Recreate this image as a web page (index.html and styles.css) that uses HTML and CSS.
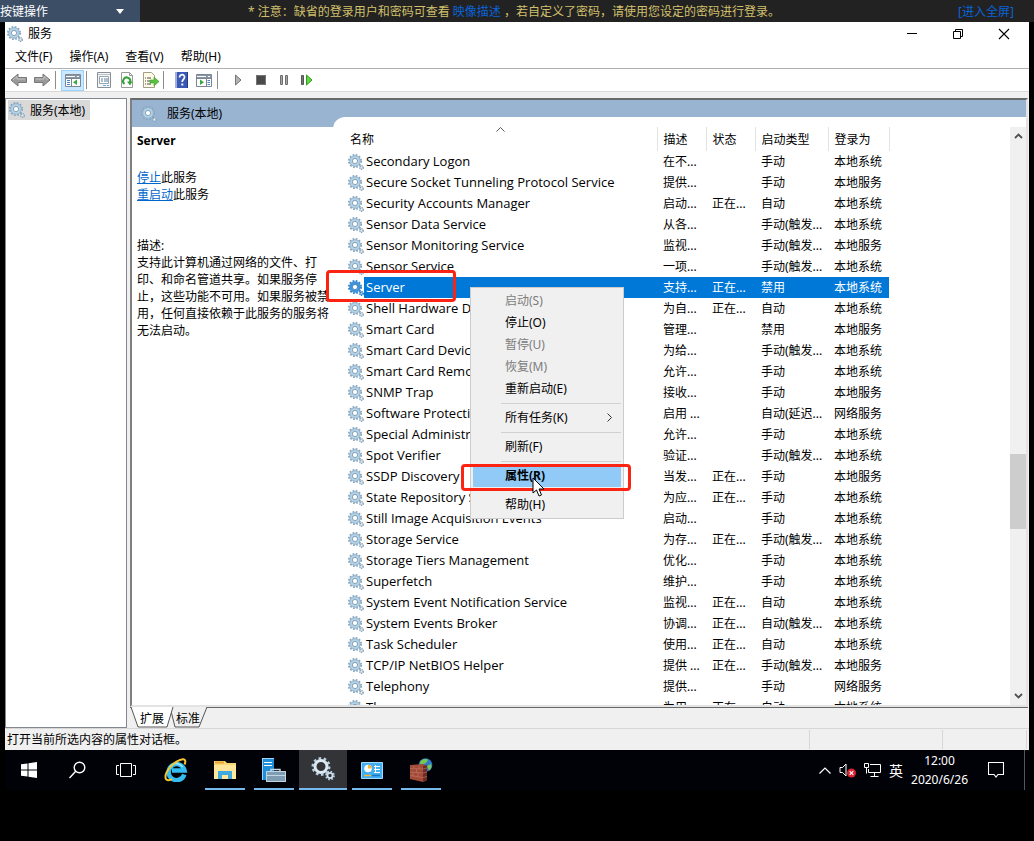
FILE: index.html
```html
<!DOCTYPE html>
<html lang="zh-CN">
<head>
<meta charset="utf-8">
<title>服务</title>
<link rel="stylesheet" href="styles.css">
</head>
<body>
<svg class="defs" aria-hidden="true">
  <symbol id="gear" viewBox="0 0 16 16">
    <circle cx="7" cy="7" r="6" fill="none" stroke="#86a3ba" stroke-width="2" stroke-dasharray="1.700 1.442"/>
    <circle cx="7" cy="7" r="4" fill="#fff" stroke="#b4d2e6" stroke-width="3"/>
    <circle cx="7" cy="7" r="5.300" fill="none" stroke="#8fafc8" stroke-width=".8"/>
    <circle cx="7" cy="7" r="2.600" fill="#fff" stroke="#6b8ba8" stroke-width=".8"/>
    <circle cx="13.500" cy="13.500" r="1.700" fill="#e8f2f8" stroke="#86a3ba" stroke-width="1.500" stroke-dasharray="1.200 .58"/>
  </symbol>
  <symbol id="gear-selected" viewBox="0 0 16 16">
    <circle cx="7" cy="7" r="6" fill="none" stroke="#2b7fc9" stroke-width="2" stroke-dasharray="1.700 1.442"/>
    <circle cx="7" cy="7" r="4.200" fill="#fff" stroke="#3f93d9" stroke-width="3.200"/>
    <circle cx="7" cy="7" r="2.600" fill="#fff" stroke="#2b70b0" stroke-width=".8"/>
    <circle cx="13.500" cy="13.500" r="1.700" fill="#9ccdf5" stroke="#1f78c6" stroke-width="1.500" stroke-dasharray="1.200 .58"/>
  </symbol>
</svg>

<header class="console-bar">
  <button class="key-menu" type="button"><span>按键操作</span><svg width="8" height="5" viewBox="0 0 8 5"><path d="M0 0h8L4 5z" fill="#fff"/></svg></button>
  <p class="console-note">* 注意：缺省的登录用户和密码可查看 <a href="#">映像描述</a> ，若自定义了密码，请使用您设定的密码进行登录。</p>
  <a class="fullscreen" href="#">[进入全屏]</a>
</header>

<main class="desktop">
  <section class="window">
    <div class="titlebar">
      <svg class="ico"><use href="#gear"/></svg>
      <h1>服务</h1>
      <div class="win-controls">
        <button type="button" aria-label="最小化"><svg width="12" height="12" viewBox="0 0 12 12"><path d="M1 5.500h10" stroke="#000"/></svg></button>
        <button type="button" aria-label="还原"><svg width="12" height="12" viewBox="0 0 12 12" fill="none" stroke="#000"><path d="M1.500 3.500h7v7h-7zM3.500 3.500v-2h7v7h-2"/></svg></button>
        <button type="button" aria-label="关闭"><svg width="12" height="12" viewBox="0 0 12 12"><path d="M1 1l10 10M11 1L1 11" stroke="#000" stroke-width="1.100"/></svg></button>
      </div>
    </div>
    <nav class="menubar">
      <button type="button">文件(F)</button><button type="button">操作(A)</button><button type="button">查看(V)</button><button type="button">帮助(H)</button>
    </nav>
    <div class="toolbar">
      <button type="button" aria-label="后退"><svg width="18" height="16" viewBox="0 0 18 16"><path d="M1 8l7-6v3.500h8.500v5H8V14z" fill="#9a9a9a" stroke="#777"/><path d="M3 8l4-3.500V7h8" fill="none" stroke="#c4c4c4"/></svg></button>
      <button type="button" aria-label="前进"><svg width="18" height="16" viewBox="0 0 18 16"><path d="M17 8l-7-6v3.500H1.500v5H10V14z" fill="#9a9a9a" stroke="#777"/><path d="M15 8l-4-3.500V7H3" fill="none" stroke="#c4c4c4"/></svg></button>
      <i class="sep"></i>
      <button class="on" type="button" aria-label="显示控制台树"><svg width="18" height="16" viewBox="0 0 18 16"><path d="M1.500 2.500h15v12h-15z" fill="#fff" stroke="#7b8794"/><path d="M2 3h14v3H2z" fill="#8995a3"/><path d="M2 4.500h9M13 4.500h2" stroke="#fff"/><path d="M7.500 6v8M2 6.500h14" stroke="#7b8794"/><path d="M3 8.500h3M3 10.500h3M3 12.500h3" stroke="#4d83c0"/><path d="M13 7.500v5.500L9 10.300z" fill="#3aa83a"/></svg></button>
      <i class="sep"></i>
      <button type="button" aria-label="属性"><svg width="18" height="16" viewBox="0 0 18 16"><path d="M2.500.5h13v15h-13z" fill="#f4f6f8" stroke="#8a8f96"/><path d="M3 2.500h12" stroke="#b9c2cb"/><path d="M4.500 4.500h9v7h-9z" fill="#fff" stroke="#9aa4ae"/><path d="M6 7h2M6 9h2M9 7h4M9 9h4" stroke="#5b7da3"/><path d="M8 13.500h3M12 13.500h2" stroke="#5bb1d8"/></svg></button>
      <button type="button" aria-label="刷新"><svg width="18" height="16" viewBox="0 0 18 16"><path d="M3.500.5h8l3 3v12h-11z" fill="#fff" stroke="#9a9a9a"/><path d="M11.500.5v3h3" fill="none" stroke="#9a9a9a"/><path d="M6.500 12A3.600 3.600 0 1 1 12 10.500" fill="none" stroke="#35a235" stroke-width="2"/><path d="M9 9.500h5.500L12 13.500z" fill="#35a235"/></svg></button>
      <button type="button" aria-label="导出列表"><svg width="18" height="16" viewBox="0 0 18 16"><path d="M2.500.5h8l3 3v12h-11z" fill="#fffbe6" stroke="#a39e8a"/><path d="M4 6h1M6 6h4M4 9h1M6 9h3M4 12h1M6 12h4" stroke="#4a4a4a"/><path d="M9 8h4V5l5 4.500-5 4.500v-3H9z" fill="#5cc043" stroke="#3c9b2b" stroke-width=".6"/></svg></button>
      <i class="sep"></i>
      <button type="button" aria-label="帮助"><svg width="18" height="16" viewBox="0 0 18 16"><path d="M3 0h13v16H3z" fill="#3a59b5"/><path d="M3 0h2v16H3z" fill="#9db0e0"/><path d="M15.500 0v16" stroke="#243b85"/><path d="M7.500 5.500c0-4 5.500-3.500 5 0-.2 1.800-2.300 2-2.300 4.500" fill="none" stroke="#fff" stroke-width="1.700"/><path d="M9.300 11.500h2v2h-2z" fill="#fff"/></svg></button>
      <button type="button" aria-label="显示操作窗格"><svg width="18" height="16" viewBox="0 0 18 16"><path d="M1.500 2.500h15v12h-15z" fill="#fff" stroke="#7b8794"/><path d="M2 3h14v3H2z" fill="#8995a3"/><path d="M2 4.500h9M13 4.500h2" stroke="#fff"/><path d="M11.500 6v8M2 6.500h14" stroke="#7b8794"/><path d="M12.500 8.500H15M12.500 10.500H15M12.500 12.500H15" stroke="#4d83c0"/><path d="M5 7.500v5.500l4-2.700z" fill="#3aa83a"/></svg></button>
      <i class="sep service-sep"></i>
      <button type="button" aria-label="启动服务"><svg width="14" height="14" viewBox="0 0 14 14"><path d="M4.500 2l5.500 5-5.500 5z" fill="#b4b4b4" stroke="#757575"/></svg></button>
      <button type="button" aria-label="停止服务"><svg width="14" height="14" viewBox="0 0 14 14"><path d="M2 2h10v10H2z" fill="#4a4a4a"/><path d="M2.500 2.500h9v9h-9z" fill="none" stroke="#777"/></svg></button>
      <button type="button" aria-label="暂停服务"><svg width="14" height="14" viewBox="0 0 14 14"><path d="M3.500 2.500h2v9h-2zM8.500 2.500h2v9h-2z" fill="#a5a5a5" stroke="#707070"/></svg></button>
      <button type="button" aria-label="重新启动服务"><svg width="14" height="14" viewBox="0 0 14 14"><path d="M1.500 2.500h2v9h-2z" fill="#777" stroke="#555"/><path d="M6.500 2l5.500 5-5.500 5z" fill="#67d34b" stroke="#2f9e1d"/></svg></button>
    </div>

    <div class="panes">
      <aside class="tree"><a href="#"><svg class="ico"><use href="#gear"/></svg><span>服务(本地)</span></a></aside>
      <div class="result">
        <div class="view">
          <h2><svg class="ico"><use href="#gear"/></svg>服务(本地)</h2>
          <div class="view-body">
            <section class="detail">
              <h3>Server</h3>
              <p class="actions"><a href="#">停止</a>此服务<br><a href="#">重启动</a>此服务</p>
              <p>描述:<br>支持此计算机通过网络的文件、打印、和命名管道共享。如果服务停止，这些功能不可用。如果服务被禁用，任何直接依赖于此服务的服务将无法启动。</p>
            </section>
            <div class="list">
              <table>
                <colgroup><col class="c-name"><col class="c-desc"><col class="c-state"><col class="c-type"><col class="c-user"></colgroup>
                <thead><tr><th>名称<svg class="sort" width="9" height="5" viewBox="0 0 9 5"><path d="M.5 4.500l4-4 4 4" fill="none" stroke="#555"/></svg></th><th>描述</th><th>状态</th><th>启动类型</th><th>登录为</th></tr></thead>
                <tbody>
                <tr><td><div class="svc"><svg class="ico"><use href="#gear"/></svg><span>Secondary Logon</span></div></td><td>在不...</td><td></td><td>手动</td><td>本地系统</td></tr>
                <tr><td><div class="svc"><svg class="ico"><use href="#gear"/></svg><span>Secure Socket Tunneling Protocol Service</span></div></td><td>提供...</td><td></td><td>手动</td><td>本地服务</td></tr>
                <tr><td><div class="svc"><svg class="ico"><use href="#gear"/></svg><span>Security Accounts Manager</span></div></td><td>启动...</td><td>正在...</td><td>自动</td><td>本地系统</td></tr>
                <tr><td><div class="svc"><svg class="ico"><use href="#gear"/></svg><span>Sensor Data Service</span></div></td><td>从各...</td><td></td><td>手动(触发...</td><td>本地系统</td></tr>
                <tr><td><div class="svc"><svg class="ico"><use href="#gear"/></svg><span>Sensor Monitoring Service</span></div></td><td>监视...</td><td></td><td>手动(触发...</td><td>本地服务</td></tr>
                <tr><td><div class="svc"><svg class="ico"><use href="#gear"/></svg><span>Sensor Service</span></div></td><td>一项...</td><td></td><td>手动(触发...</td><td>本地系统</td></tr>
                <tr class="selected"><td><div class="svc"><svg class="ico"><use href="#gear-selected"/></svg><span>Server</span></div></td><td>支持...</td><td>正在...</td><td>禁用</td><td>本地系统</td></tr>
                <tr><td><div class="svc"><svg class="ico"><use href="#gear"/></svg><span>Shell Hardware Detection</span></div></td><td>为自...</td><td>正在...</td><td>自动</td><td>本地系统</td></tr>
                <tr><td><div class="svc"><svg class="ico"><use href="#gear"/></svg><span>Smart Card</span></div></td><td>管理...</td><td></td><td>禁用</td><td>本地服务</td></tr>
                <tr><td><div class="svc"><svg class="ico"><use href="#gear"/></svg><span>Smart Card Device Enumeration Service</span></div></td><td>为给...</td><td></td><td>手动(触发...</td><td>本地系统</td></tr>
                <tr><td><div class="svc"><svg class="ico"><use href="#gear"/></svg><span>Smart Card Removal Policy</span></div></td><td>允许...</td><td></td><td>手动</td><td>本地系统</td></tr>
                <tr><td><div class="svc"><svg class="ico"><use href="#gear"/></svg><span>SNMP Trap</span></div></td><td>接收...</td><td></td><td>手动</td><td>本地服务</td></tr>
                <tr><td><div class="svc"><svg class="ico"><use href="#gear"/></svg><span>Software Protection</span></div></td><td>启用 ...</td><td></td><td>自动(延迟...</td><td>网络服务</td></tr>
                <tr><td><div class="svc"><svg class="ico"><use href="#gear"/></svg><span>Special Administration Console Helper</span></div></td><td>允许...</td><td></td><td>手动</td><td>本地系统</td></tr>
                <tr><td><div class="svc"><svg class="ico"><use href="#gear"/></svg><span>Spot Verifier</span></div></td><td>验证...</td><td></td><td>手动(触发...</td><td>本地系统</td></tr>
                <tr><td><div class="svc"><svg class="ico"><use href="#gear"/></svg><span>SSDP Discovery</span></div></td><td>当发...</td><td>正在...</td><td>手动</td><td>本地服务</td></tr>
                <tr><td><div class="svc"><svg class="ico"><use href="#gear"/></svg><span>State Repository Service</span></div></td><td>为应...</td><td>正在...</td><td>手动</td><td>本地系统</td></tr>
                <tr><td><div class="svc"><svg class="ico"><use href="#gear"/></svg><span>Still Image Acquisition Events</span></div></td><td>启动...</td><td></td><td>手动</td><td>本地系统</td></tr>
                <tr><td><div class="svc"><svg class="ico"><use href="#gear"/></svg><span>Storage Service</span></div></td><td>为存...</td><td>正在...</td><td>手动(触发...</td><td>本地系统</td></tr>
                <tr><td><div class="svc"><svg class="ico"><use href="#gear"/></svg><span>Storage Tiers Management</span></div></td><td>优化...</td><td></td><td>手动</td><td>本地系统</td></tr>
                <tr><td><div class="svc"><svg class="ico"><use href="#gear"/></svg><span>Superfetch</span></div></td><td>维护...</td><td></td><td>手动</td><td>本地系统</td></tr>
                <tr><td><div class="svc"><svg class="ico"><use href="#gear"/></svg><span>System Event Notification Service</span></div></td><td>监视...</td><td>正在...</td><td>自动</td><td>本地系统</td></tr>
                <tr><td><div class="svc"><svg class="ico"><use href="#gear"/></svg><span>System Events Broker</span></div></td><td>协调...</td><td>正在...</td><td>自动(触发...</td><td>本地系统</td></tr>
                <tr><td><div class="svc"><svg class="ico"><use href="#gear"/></svg><span>Task Scheduler</span></div></td><td>使用...</td><td>正在...</td><td>自动</td><td>本地系统</td></tr>
                <tr><td><div class="svc"><svg class="ico"><use href="#gear"/></svg><span>TCP/IP NetBIOS Helper</span></div></td><td>提供 ...</td><td>正在...</td><td>手动(触发...</td><td>本地服务</td></tr>
                <tr><td><div class="svc"><svg class="ico"><use href="#gear"/></svg><span>Telephony</span></div></td><td>提供...</td><td></td><td>手动</td><td>网络服务</td></tr>
                <tr><td><div class="svc"><svg class="ico"><use href="#gear"/></svg><span>Themes</span></div></td><td>为用...</td><td>正在...</td><td>自动</td><td>本地系统</td></tr>
                </tbody>
              </table>
              <div class="scrollbar">
                <svg width="9" height="6" viewBox="0 0 9 6"><path d="M1 5l3.500-3.500L8 5" fill="none" stroke="#505050" stroke-width="1.800"/></svg>
                <div class="track"><i class="before"></i><i class="thumb"></i><i class="after"></i></div>
                <svg width="9" height="6" viewBox="0 0 9 6"><path d="M1 1l3.500 3.500L8 1" fill="none" stroke="#505050" stroke-width="1.800"/></svg>
              </div>
            </div>
          </div>
        </div>
        <div class="tabs">
          <svg class="tab-shape" width="80" height="21" viewBox="0 0 80 21" fill="none"><path d="M40 0L45 20h24l8-20" fill="#f0f0f0" stroke="#555"/><path d="M1 0h42L37 20.500H8z" fill="#fff"/><path d="M1 0l7 20h29l6-20" stroke="#555"/></svg>
          <button type="button">扩展</button><button type="button">标准</button>
        </div>
      </div>
    </div>
    <footer class="status"><span class="message">打开当前所选内容的属性对话框。</span><span class="cell wide"></span><span class="cell"></span></footer>
  </section>

  <nav class="taskbar">
    <button type="button" aria-label="开始"><svg width="16" height="16" viewBox="0 0 16 16" fill="#fff"><path d="M0 2.300l6.500-.9v6.100H0zM7.500 1.200L16 0v7.500H7.500zM0 8.500h6.500v6.100L0 13.700zM7.500 8.500H16V16l-8.500-1.200z"/></svg></button>
    <button type="button" aria-label="搜索"><svg width="18" height="18" viewBox="0 0 18 18" fill="none" stroke="#fff" stroke-width="1.400"><circle cx="10.500" cy="6.500" r="5.300"/><path d="M6.700 10.300L.5 17"/></svg></button>
    <button type="button" aria-label="任务视图"><svg width="22" height="16" viewBox="0 0 22 16" fill="none" stroke="#fff"><path d="M4.500 1.500h11v13h-11zM3 3.500H.5v9H3M17 3.500h2.500v9H17"/></svg></button>
    <button type="button" aria-label="Internet Explorer"><svg width="24" height="24" viewBox="0 0 24 24" fill="none"><path d="M20.300 16.500A8 8 0 1 1 20.500 12.500H8" stroke="#35bdf3" stroke-width="4.500"/><path d="M18.500 9A7.500 7.500 0 0 0 6 9" stroke="#b3ebff" stroke-width="1.200"/><path d="M20.500 6.500C22.500 2.500 20.500 0 16.500 1.800 9 4.500 1 13.500 1.500 19.500c.3 3.800 4.500 3 6.500 1.500" stroke="#f6c631" stroke-width="2"/></svg></button>
    <button class="running" type="button" aria-label="文件资源管理器"><svg width="22" height="20" viewBox="0 0 22 20"><path d="M0 1h11l2 2h9v16H0z" fill="#f7d774"/><path d="M0 5h22v14H0z" fill="#ffe69b"/><path d="M1 1.500h9v2H1z" fill="#e8a33b"/><path d="M4 19v-8h14v8h-4v-4H8v4z" fill="#3fa9e0"/></svg></button>
    <button class="running" type="button" aria-label="服务器管理器"><svg width="24" height="24" viewBox="0 0 24 24"><path d="M0 0h12v22H0z" fill="#1d8fdb"/><path d="M0 .5h12M.5 0v22" stroke="#9fd4f7"/><path d="M2 4.500h8M2 7.500h8" stroke="#fff"/><path d="M9 11.500h9v3H9z" fill="none" stroke="#c9d6df" stroke-width="1.500"/><path d="M4 13h20v11H4z" fill="#7e9db3"/><path d="M4.500 13.500h19v10h-19zM4 17.500h20" fill="none" stroke="#c3d6e3"/></svg></button>
    <button class="active" type="button" aria-label="服务"><svg width="24" height="24" viewBox="0 0 24 24" fill="none"><circle cx="10" cy="9.500" r="8.300" stroke="#b7cde0" stroke-width="2.400" stroke-dasharray="2.600 2.600"/><circle cx="10" cy="9.500" r="6" stroke="#dbe8f2" stroke-width="3"/><circle cx="19" cy="18.500" r="4" stroke="#b7cde0" stroke-width="1.800" stroke-dasharray="1.600 1.540"/><circle cx="19" cy="18.500" r="2.600" stroke="#cfe0ed" stroke-width="1.800"/></svg></button>
    <button class="running" type="button" aria-label="控制面板"><svg width="22" height="17" viewBox="0 0 22 17"><path d="M.5.5h21v16H.5z" fill="#42aef0" stroke="#9fdcff"/><circle cx="7" cy="6.500" r="3.800" fill="#fff"/><path d="M7 6.500V2.700a3.800 3.800 0 0 1 3.800 3.800z" fill="#f6b73c"/><path d="M13 4.500h6M13 7.500h6M13 10.500h6M14.500 3v8" stroke="#fff"/><path d="M3 13.500h7" stroke="#f6b73c" stroke-width="1.500"/><path d="M11 13.500h8" stroke="#1976c0" stroke-width="1.500"/></svg></button>
    <button class="running" type="button" aria-label="防火墙"><svg width="24" height="24" viewBox="0 0 24 24" fill="none"><circle cx="16.500" cy="7" r="6.800" fill="#3079c9"/><path d="M11 4c2-3 6-4 8-2l-2 3-3 1-2 3zM18 8l4-2c1 3 0 5-2 6.500z" fill="#77c94e"/><path d="M1 7l13-1 4 2v14l-4 2-13-3z" fill="#a34a38"/><path d="M14 8l4-1v15l-4 2z" fill="#6e2b20"/><path d="M1 10.500l13 .5 4-1M1 14l13 1 4-1M1 17.500l13 2 4-1M5 7.500v3M10 7.500V11M7.500 11v3.500M4 14v4M9 15v4" stroke="#c07a66" stroke-width=".6"/></svg></button>
    <div class="tray">
      <svg width="12" height="7" viewBox="0 0 12 7"><path d="M.5 6.500L6 1l5.500 5.500" fill="none" stroke="#fff" stroke-width="1.200"/></svg>
      <svg width="17" height="16" viewBox="0 0 17 16" fill="none"><path d="M1 5.500h2.500L7 2v12l-3.500-3.500H1z" stroke="#fff"/><circle cx="12.500" cy="11" r="4.500" fill="#d9222f"/><path d="M10.700 9.200l3.600 3.600M14.300 9.200l-3.600 3.600" stroke="#fff" stroke-width="1.200"/></svg>
      <svg width="17" height="14" viewBox="0 0 17 14" fill="none" stroke="#fff"><path d="M6 1.500h10.500v8h-12V6M10.500 10v3M6.500 13.500h8M.5.500h4v4h-4zM2.500 4.500v6"/></svg>
      <span class="ime">英</span>
      <time datetime="2020-06-26T12:00">12:00<br>2020/6/26</time>
      <svg class="notify" width="16" height="16" viewBox="0 0 16 16" fill="none" stroke="#fff"><path d="M.5.5h15v12H10l-2 2.500-2-2.500H.5z" stroke-width="1.100"/></svg>
      <i class="peek"></i>
    </div>
  </nav>

  <menu class="context">
    <li><button type="button" disabled>启动(S)</button></li>
    <li><button type="button">停止(O)</button></li>
    <li><button type="button" disabled>暂停(U)</button></li>
    <li><button type="button" disabled>恢复(M)</button></li>
    <li><button type="button">重新启动(E)</button></li>
    <li class="rule"></li>
    <li><button type="button">所有任务(K)<svg width="5" height="9" viewBox="0 0 5 9"><path d="M.5.500l4 4-4 4" fill="none" stroke="#333"/></svg></button></li>
    <li class="rule"></li>
    <li><button type="button">刷新(F)</button></li>
    <li class="rule"></li>
    <li><button class="hover" type="button">属性(R)</button></li>
    <li class="rule"></li>
    <li><button type="button">帮助(H)</button></li>
  </menu>
  <div class="mark mark-service"></div>
  <div class="mark mark-menu"></div>
  <svg class="cursor" width="13" height="20" viewBox="0 0 13 20"><path d="M1 1v15l3.500-3 2.500 6 2.500-1-2.500-6H12z" fill="#fff" stroke="#000"/></svg>
</main>
</body>
</html>
```

FILE: styles.css
```css
* { box-sizing: border-box; }

body {
  margin: 0;
  height: 100vh;
  display: flex;
  flex-direction: column;
  overflow: hidden;
  background: #000;
  color: #000;
  font: 12px/17px "Noto Sans", "Noto Sans CJK SC", sans-serif;
}

h1, h2, h3, p, menu { margin: 0; padding: 0; font-size: 12px; font-weight: 400; }
button { font: inherit; color: inherit; border: 0; padding: 0; background: none; }
a { color: #0066cc; }
svg { flex: none; display: block; }
.defs { position: absolute; width: 0; height: 0; }
.ico { width: 16px; height: 16px; }

/* Remote console strip */
.console-bar {
  flex: none;
  height: 22px;
  display: grid;
  grid-template-columns: 140px 1fr 140px;
  align-items: center;
  background: #222;
}
.key-menu {
  height: 22px;
  display: flex;
  align-items: center;
  justify-content: space-between;
  padding-right: 16px;
  background: #3b4e66;
  color: #fff;
}
.console-note { padding-right: 6px; text-align: center; color: #d2c06c; white-space: nowrap; }
.console-note a, .fullscreen { color: #0a63d8; text-decoration: none; }
.fullscreen { padding-right: 20px; text-align: right; }

/* Desktop */
.desktop {
  flex: 1;
  min-height: 0;
  position: relative;
  display: flex;
  flex-direction: column;
  padding: 0 5px 51px;
}
.window {
  flex: 1;
  min-height: 0;
  display: flex;
  flex-direction: column;
  background: #f0f0f0;
}
.titlebar, .menubar, .toolbar { flex: none; display: flex; align-items: center; background: #fff; }
.titlebar { height: 23px; padding-left: 2px; gap: 5px; }
.win-controls { margin-left: auto; display: flex; padding-right: 2px; }
.win-controls button { width: 46px; height: 20px; display: grid; place-items: center; }
.menubar { height: 24px; padding-left: 10px; gap: 17px; border-bottom: 1px solid #b0b0b0; }
.toolbar { height: 23px; padding-left: 2px; border-bottom: 1px solid #d9d9d9; }
.toolbar button { width: 23px; height: 21px; display: grid; place-items: center; }
.toolbar .on { background: #cce8ff; border: 1px solid #99d1ff; }
.toolbar .sep { width: 1px; height: 18px; margin: 0 5px 0 2px; background: #8d8d8d; }
.toolbar .service-sep { margin-right: 8px; }

.panes { flex: 1; min-height: 0; display: flex; gap: 3px; padding-top: 6px; }
.tree { width: 122px; border: 1px solid #828790; background: #fff; padding: 1px 2px; }
.tree a {
  display: inline-flex;
  align-items: center;
  gap: 5px;
  height: 20px;
  padding: 0 5px 0 1px;
  background: #d9d9d9;
  color: #000;
  text-decoration: none;
}
.result { flex: 1; min-width: 0; display: flex; flex-direction: column; padding-right: 1px; }
.view {
  flex: 1;
  min-height: 0;
  display: flex;
  flex-direction: column;
  border: 2px solid #696969;
  border-color: #696969 #e3e3e3 #e3e3e3 #808080;
  background: #fff;
}
.view h2 {
  flex: none;
  height: 27px;
  display: flex;
  align-items: center;
  gap: 10px;
  padding-left: 9px;
  background: #99b4d1;
}
.view-body { flex: 1; min-height: 0; display: flex; margin-top: -10px; }
.detail { width: 201px; padding: 15px 0 0 5px; }
.detail h3 { font-weight: 700; margin-bottom: 20px; }
.detail .actions { margin-bottom: 34px; }
.list {
  flex: 1;
  min-width: 0;
  display: flex;
  justify-content: space-between;
  padding: 10px 0 0 12px;
  overflow: hidden;
  background: #fff;
  border-top-left-radius: 12px;
}

/* Service table */
table { width: 544px; table-layout: fixed; border-collapse: collapse; align-self: flex-start; }
.c-name { width: 312px; }
.c-desc, .c-state { width: 49px; }
.c-type { width: 73px; }
.c-user { width: 61px; }
th, td { padding: 0 0 0 6px; text-align: left; font-weight: 400; white-space: nowrap; overflow: hidden; }
th { position: relative; height: 24px; border-right: 1px solid #e3e3e3; }
th:first-child { padding-left: 5px; }
td { height: 21px; }
td:first-child { padding-left: 3px; }
.sort { position: absolute; top: 0; left: 50%; margin-left: -5px; }
.svc { display: flex; align-items: center; height: 21px; font-family: "Open Sans", sans-serif; font-size: 13px; }
.svc span { flex: 1; height: 21px; line-height: 21px; padding-left: 2px; }
.selected { color: #fff; }
.selected td:not(:first-child), .selected .svc span { background: #0078d7; }

.scrollbar {
  width: 16px;
  display: flex;
  flex-direction: column;
  align-items: center;
  padding: 6px 0;
  background: #f0f0f0;
}
.track { flex: 1; width: 100%; display: flex; flex-direction: column; padding: 6px 0; }
.before { flex: 310; }
.thumb { flex: 75; background: #cdcdcd; }
.after { flex: 158; }

.tabs { position: relative; height: 21px; display: flex; gap: 12px; padding-left: 10px; border-top: 1px solid #696969; }
.tabs button { position: relative; }
.tab-shape { position: absolute; left: 0; top: -1px; }

.status { flex: none; height: 22px; display: flex; border-top: 1px solid #d7d7d7; }
.message { flex: 1; padding: 2px; }
.cell { width: 85px; margin: 1px 0; border-left: 1px solid #d7d7d7; }
.cell.wide { width: 133px; }
.cell:last-child { border-right: 1px solid #d7d7d7; margin-right: 2px; }

/* Taskbar */
.taskbar { flex: none; height: 40px; display: flex; gap: 1px; background: #010208; color: #fff; }
.taskbar button { width: 48px; height: 40px; display: grid; place-items: center; }
.taskbar .running { background: linear-gradient(#76b9ed, #76b9ed) bottom / 40px 2px no-repeat; }
.taskbar .active { background: #333438; border-bottom: 2px solid #76b9ed; }
.tray { margin-left: auto; display: flex; align-items: center; gap: 8px; padding-right: 4px; }
.ime { font-size: 14px; }
.tray time { line-height: 19px; text-align: center; }
.notify { margin: 0 12px 0 12px; }
.peek { width: 1px; height: 40px; background: #56575c; }

/* Context menu */
.context {
  position: absolute;
  left: 470px;
  top: 265px;
  width: 154px;
  padding: 2px;
  list-style: none;
  background: #f0f0f0;
  border: 1px solid #ccc;
}
.context button {
  width: 100%;
  height: 22px;
  display: flex;
  align-items: center;
  justify-content: space-between;
  padding: 0 9px 2px 32px;
}
.context li { height: 22px; }
.context button:disabled { color: #7c7c7c; }
.context .hover { background: #91c9f7; font-weight: 700; }
.context .rule { height: 1px; margin: 3px 0 3px 28px; background: #d0d0d0; }

/* Red callouts and pointer */
.mark { position: absolute; border: 3px solid #fb2412; border-radius: 4px; }
.mark-service { left: 326px; top: 248px; width: 130px; height: 32px; }
.mark-menu { left: 461px; top: 442px; width: 170px; height: 27px; }
.cursor { position: absolute; left: 532px; top: 455px; }
```
